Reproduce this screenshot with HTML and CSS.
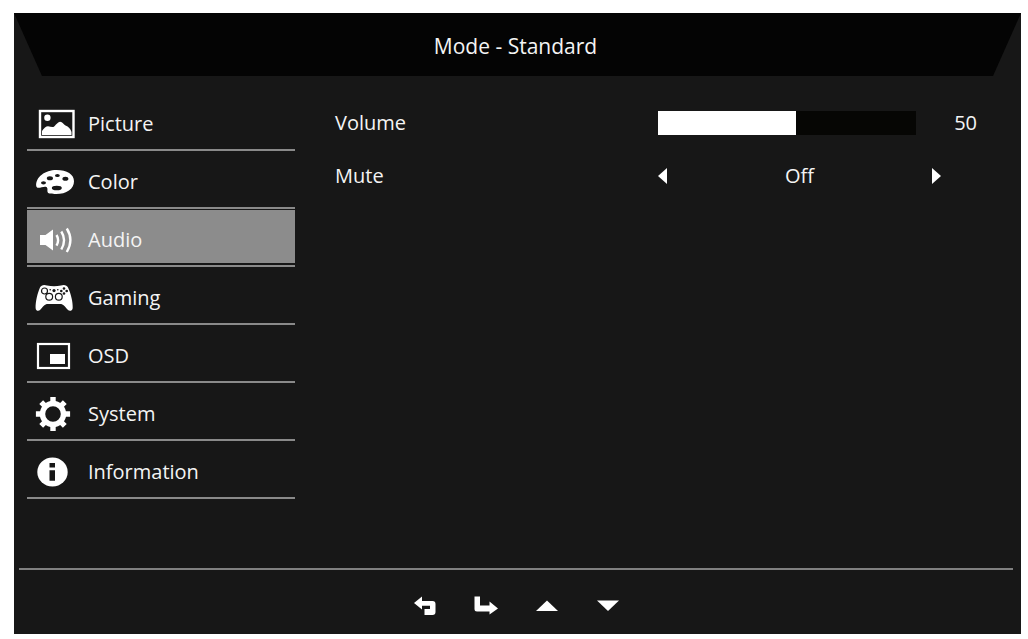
FILE: index.html
```html
<!DOCTYPE html>
<html lang="en">
<head>
  <meta charset="UTF-8">
  <meta name="viewport" content="width=device-width, initial-scale=1.0">
  <title>Monitor Menu - Audio</title>
  <link rel="stylesheet" href="styles.css">
</head>
<body>
  <div class="osd">
    <header class="osd-header">
      <h1>Mode - Standard</h1>
    </header>

    <div class="osd-body">
      <nav class="menu">
        <a href="#picture">
          <svg viewBox="0 0 40 36" aria-hidden="true">
            <rect x="5" y="5" width="33.5" height="26" fill="none" stroke="#fff" stroke-width="2.4"/>
            <circle cx="12.4" cy="11.8" r="3.2"/>
            <path d="M7 29V25Q10 20.4 13 20.3Q16 21.2 18.4 21C20.5 20 22.5 15.8 25.2 15.8C27.5 15.8 28.5 18.5 30.5 19.5C33.5 20.5 35.5 23 36.5 26V29Z"/>
          </svg>
          <span>Picture</span>
        </a>
        <a href="#color">
          <svg viewBox="0 0 40 36" aria-hidden="true">
            <path fill-rule="evenodd" d="M1.2 22C.5 13 10 6 21.5 6C32 6 39 10.5 39 17.2C39 25 31.500 30 21 30C17 30 13.5 29.800 12.8 28.6C11.8 26.8 13.2 24.5 11.8 23.2C9.5 21.5 5 24.5 2.5 23.7Q1.4 23.2 1.2 22ZM6 18.8a2.5 1.6 0 1 0 5 0a2.5 1.6 0 1 0-5 0ZM11.8 14.2a3.1 2 0 1 0 6.2 0a3.1 2 0 1 0-6.2 0ZM20 11.6a2.4 1.5 0 1 0 4.8 0a2.4 1.5 0 1 0-4.8 0ZM27.4 14.7a3 2 0 1 0 6 0a3 2 0 1 0-6 0ZM16.8 24a5 2.3 0 1 0 10 0a5 2.3 0 1 0-10 0Z"/>
          </svg>
          <span>Color</span>
        </a>
        <a href="#audio" class="active" aria-current="page">
          <svg viewBox="0 0 40 36" aria-hidden="true">
            <path d="M5 13H10.5L18 7.5V28.5L10.5 23H5Z"/>
            <path d="M21.5 13Q24.7 18.2 21.5 23.6M26.3 9.5Q31.8 18 26.3 27.5M31.8 6.5Q39 18 31.8 30" fill="none" stroke="#fff" stroke-width="2.4"/>
          </svg>
          <span>Audio</span>
        </a>
        <a href="#gaming">
          <svg viewBox="0 0 40 36" aria-hidden="true">
            <path d="M5 7.5C6 5.2 9 4.3 12 5.5Q19 6.8 26 5.5C29 4.3 32 5.2 33 7.5C36 14 38 22 37.7 28C37.5 31 34.5 31.8 32.5 29.5C30 26.5 28.5 24 25 24H13C9.5 24 8 26.500 5.5 29.5C3.5 31.8.7 31 .6 28C.4 22 2.5 13 5 7.5Z"/>
            <g fill="none" stroke="#171717" stroke-width="1.2">
              <circle cx="9.5" cy="11" r="3"/>
              <circle cx="14.2" cy="16.7" r="3.4"/>
              <circle cx="23.8" cy="16.7" r="3.4"/>
            </g>
            <g fill="#171717">
              <circle cx="19" cy="10.6" r="1.6"/>
              <circle cx="15.2" cy="9.8" r=".8"/>
              <circle cx="22.8" cy="9.8" r=".8"/>
              <circle cx="29" cy="8.5" r="1.3"/>
              <circle cx="26.3" cy="11" r="1.3"/>
              <circle cx="31.7" cy="11" r="1.3"/>
              <circle cx="29" cy="13.5" r="1.3"/>
            </g>
          </svg>
          <span>Gaming</span>
        </a>
        <a href="#osd">
          <svg viewBox="0 0 40 36" aria-hidden="true">
            <rect x="3" y="6" width="31" height="24" fill="none" stroke="#fff" stroke-width="2.2"/>
            <rect x="15" y="16" width="15" height="10"/>
          </svg>
          <span>OSD</span>
        </a>
        <a href="#system">
          <svg viewBox="0 0 40 36" aria-hidden="true">
            <circle cx="18" cy="18" r="10.5" fill="none" stroke="#fff" stroke-width="5.4"/>
            <path d="M18 .9V7M18 29V35.1M.9 18H7M29 18H35.1M6.2 6.2L10.2 10.2M25.8 25.8L29.8 29.8M29.8 6.2L25.8 10.2M10.2 25.8L6.2 29.8" fill="none" stroke="#fff" stroke-width="5.4"/>
          </svg>
          <span>System</span>
        </a>
        <a href="#information">
          <svg viewBox="0 0 40 36" aria-hidden="true">
            <ellipse cx="17.5" cy="18" rx="15.2" ry="14.5"/>
            <path d="M14.5 9H20V13.4H14.5ZM14.5 16.2H20V26.8H14.5Z" fill="#171717"/>
          </svg>
          <span>Information</span>
        </a>
      </nav>

      <main class="settings">
        <div class="row">
          <label for="volume">Volume</label>
          <input type="range" id="volume" min="0" max="100" value="50">
          <output for="volume">50</output>
        </div>
        <div class="row">
          <span id="mute-label">Mute</span>
          <div class="stepper" role="group" aria-labelledby="mute-label">
            <button type="button" aria-label="Previous">
              <svg viewBox="0 0 9 16" aria-hidden="true"><path d="M9 0V16L0 8Z"/></svg>
            </button>
            <span>Off</span>
            <button type="button" aria-label="Next">
              <svg viewBox="0 0 9 16" aria-hidden="true"><path d="M0 0V16L9 8Z"/></svg>
            </button>
          </div>
        </div>
      </main>
    </div>

    <footer class="osd-footer">
      <button type="button" aria-label="Back">
        <svg viewBox="0 0 24 20" aria-hidden="true"><path d="M1 7L9 .5V5H19.5Q22.5 5 22.5 8V16Q22.5 19 19.5 19H11.5V13H17V9.8H9V13.5Z"/></svg>
      </button>
      <button type="button" aria-label="Enter">
        <svg viewBox="0 0 24 20" aria-hidden="true"><path d="M.5 .5H6V9.5H15.500V5.5L24 12.5L15.5 18.5V15.5H3Q.5 15.5 .5 13Z"/></svg>
      </button>
      <button type="button" aria-label="Up">
        <svg viewBox="0 0 24 20" aria-hidden="true"><path d="M1 15L12 4.5L23 15Z"/></svg>
      </button>
      <button type="button" aria-label="Down">
        <svg viewBox="0 0 24 20" aria-hidden="true"><path d="M1 4.5H23L12 15Z"/></svg>
      </button>
    </footer>
  </div>
</body>
</html>
```
FILE: styles.css
```css
* { margin: 0; padding: 0; box-sizing: border-box; }
body { background: #fff; padding: 13px 7px 5px 14px; font-family: "Open Sans", "Noto Sans", sans-serif; font-size: 20px; line-height: 28px; color: #f4f4f4; }
svg { display: block; fill: #fff; }
button { background: none; border: none; cursor: pointer; }

.osd { background: #171717; min-height: calc(100vh - 18px); display: flex; flex-direction: column; }

.osd-header { background: #040404; padding: 19px 36px 16px 32px; text-align: center; clip-path: polygon(0 0, 100% 0, calc(100% - 28px) 100%, 28px 100%); }
.osd-header h1 { font-size: 21px; font-weight: 400; }

.osd-body { flex: 1; display: grid; grid-template-columns: 268px 1fr; gap: 40px; padding: 17px 44px 18px 13px; }

/* left menu */
.menu a {
  display: flex; align-items: center; gap: 13px; height: 58px; padding: 5px 8px 0;
  border-bottom: 2px solid #8a8a8a; color: #f4f4f4; text-decoration: none;
}
.menu a.active { background: #8c8c8c; background-clip: padding-box; box-shadow: inset 0 1px #171717, inset 0 -2px #171717; }
.menu svg { width: 40px; height: 36px; }

/* option rows */
.settings { padding-top: 3px; }
.row { display: grid; grid-template-columns: 1fr 258px 61px; align-items: center; height: 53px; }
.row output { text-align: right; }

input[type="range"] {
  appearance: none; -webkit-appearance: none; width: 100%; height: 24px;
  background: linear-gradient(to right, #fff 50%, #060604 50%);
}
input[type="range"]::-webkit-slider-thumb { -webkit-appearance: none; width: 18px; height: 24px; background: #fff; }

.stepper { grid-column: 2 / 4; display: flex; justify-content: space-between; align-items: center; padding-right: 36px; }
.stepper svg { width: 9px; height: 16px; }

.osd-footer {
  display: flex; justify-content: center; align-items: center; gap: 37px;
  margin: 0 8px 0 5px; padding: 26px 0 18px; border-top: 2px solid #808080;
}
.osd-footer svg { width: 24px; height: 20px; }
```
